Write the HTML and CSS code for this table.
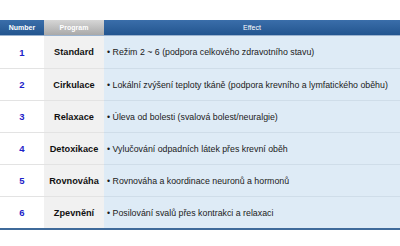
FILE: index.html
```html
<!DOCTYPE html>
<html>
<head>
<meta charset="utf-8">
<link rel="stylesheet" href="styles.css">
</head>
<body>
<div class="page">
<table class="prog">
<thead>
<tr><th class="c-num">Number</th><th class="c-prog">Program</th><th class="c-eff">Effect</th></tr>
</thead>
<tbody>
<tr><td class="c-num">1</td><td class="c-prog">Standard</td><td class="c-eff">• Režim 2 ~ 6 (podpora celkového zdravotního stavu)</td></tr>
<tr><td class="c-num">2</td><td class="c-prog">Cirkulace</td><td class="c-eff">• Lokální zvýšení teploty tkáně (podpora krevního a lymfatického oběhu)</td></tr>
<tr><td class="c-num">3</td><td class="c-prog">Relaxace</td><td class="c-eff">• Úleva od bolesti (svalová bolest/neuralgie)</td></tr>
<tr><td class="c-num">4</td><td class="c-prog">Detoxikace</td><td class="c-eff">• Vylučování odpadních látek přes krevní oběh</td></tr>
<tr><td class="c-num">5</td><td class="c-prog">Rovnováha</td><td class="c-eff">• Rovnováha a koordinace neuronů a hormonů</td></tr>
<tr><td class="c-num">6</td><td class="c-prog">Zpevnění</td><td class="c-eff">• Posilování svalů přes kontrakci a relaxaci</td></tr>
</tbody>
</table>
</div>
</body>
</html>
```
FILE: styles.css
```css
html, body { margin: 0; padding: 0; background: #fff; }
.page { padding-top: 20px; width: 400px; }
.prog {
  width: 400px;
  border-collapse: collapse;
  table-layout: fixed;
  font-family: "Liberation Sans", Arial, sans-serif;
  border-bottom: 2px solid #3f6a9a;
}
.prog th {
  height: 15px;
  padding: 0;
  font-size: 7px;
  font-weight: bold;
  color: #fff;
  text-align: center;
  background: linear-gradient(#3a6eaa, #23558f);
  border-bottom: 1px solid #9bb3cf;
}
.prog th.c-prog { background: linear-gradient(#d6d6d6, #a9a9a9); }
.prog th.c-eff { font-weight: normal; }
.c-num { width: 44px; }
.c-prog { width: 60px; }
.prog td {
  height: 31px;
  padding: 0;
  border-top: 1px solid #e3e3e3;
}
.prog tbody tr:first-child td { border-top: none; height: 32px; }
.prog td.c-num {
  background: #fff;
  color: #1d22c8;
  font-weight: bold;
  font-size: 9.5px;
  text-align: center;
}
.prog td.c-prog {
  background: #f1f1f1;
  color: #111;
  font-weight: bold;
  font-size: 9.2px;
  text-align: center;
}
.prog td.c-eff {
  background: #deebf6;
  color: #1a1a1a;
  font-size: 8.8px;
  padding-left: 3px;
  line-height: 14px;
  border-top-color: #cfdde9;
}
```
